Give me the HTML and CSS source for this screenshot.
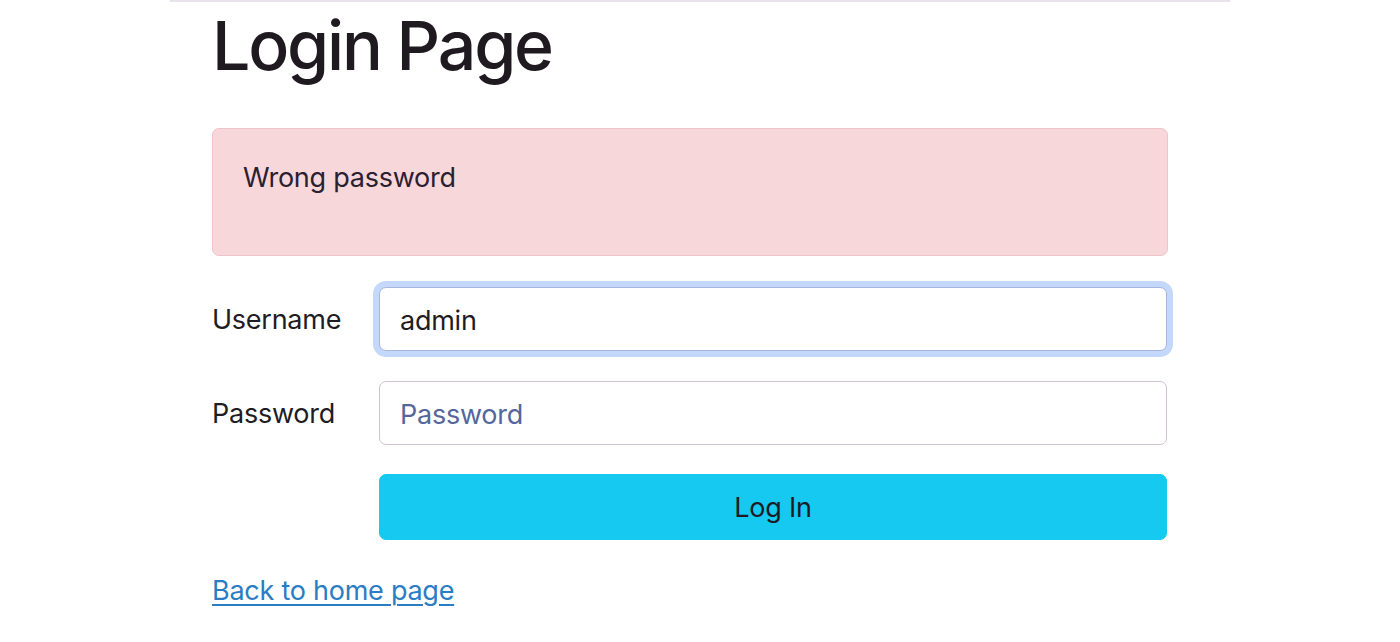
FILE: index.html
```html
<!DOCTYPE html>
<html lang="en">
<head>
<meta charset="utf-8">
<title>Login Page</title>
<link rel="stylesheet" href="styles.css">
</head>
<body>
<div class="page">
  <div class="content">
    <h1 class="title">Login Page</h1>
    <div class="alert">Wrong password</div>
    <form class="form">
      <div class="row">
        <label class="label" for="username">Username</label>
        <input class="field field-focus" id="username" type="text" value="admin" autofocus>
      </div>
      <div class="row">
        <label class="label" for="password">Password</label>
        <input class="field" id="password" type="password" placeholder="Password">
      </div>
      <div class="row">
        <span></span>
        <button class="btn" type="button">Log In</button>
      </div>
    </form>
    <p class="back"><a href="#">Back to home page</a></p>
  </div>
</div>
</body>
</html>
```
FILE: styles.css
```css
* { box-sizing: border-box; }
html, body { margin: 0; background: #fff; }
body {
  font-family: Inter, "Noto Sans", "Liberation Sans", sans-serif;
  color: #212529;
  font-size: 27px;
  line-height: 1.5;
  letter-spacing: -0.25px;
}
.page {
  width: 1060px;
  margin: 0 auto;
  border-top: 2px solid #e9e1ec;
}
.content {
  width: 956px;
  margin-left: 42px;
}
.title {
  font-size: 68px;
  font-weight: 500;
  line-height: 1.2;
  margin: 3px 0 41px;
  color: #1f1a1f;
  letter-spacing: -2.2px;
}
.alert {
  height: 128px;
  padding: 29px 30px 0;
  background: #f8d7da;
  border: 1px solid #eec3cb;
  border-radius: 7px;
  line-height: 40.5px;
  color: #2a2030;
  margin-bottom: 31px;
}
.form {
  display: flex;
  flex-direction: column;
  gap: 30px;
}
.row {
  display: grid;
  grid-template-columns: 167px 788px;
  align-items: center;
}
.label {
  font-size: 27px;
  color: #1f1c24;
  padding-top: 3px;
}
.field {
  height: 64px;
  width: 100%;
  padding: 3px 20px 0;
  font-family: inherit;
  font-size: 27px;
  letter-spacing: -0.25px;
  color: #1f1c24;
  background: #fff;
  border: 1.5px solid #cfc3d3;
  border-radius: 7px;
  outline: none;
}
.field::placeholder { color: #54669c; opacity: 1; }
.field-focus {
  border-color: #a9b4de;
  box-shadow: 0 0 0 6px #c3d8fb;
  caret-color: #1f1c24;
}
.btn {
  height: 66px;
  width: 100%;
  padding-top: 3px;
  font-family: inherit;
  font-size: 27px;
  letter-spacing: -0.25px;
  color: #1c1b26;
  background: #15c9f0;
  border: 1px solid #15c9f0;
  border-radius: 7px;
  margin-top: -1px;
}
.back {
  margin: 31px 0 0;
}
.back a {
  color: #2a7dc4;
  text-decoration: underline;
  text-decoration-thickness: 2px;
  text-underline-offset: 4px;
}
```
